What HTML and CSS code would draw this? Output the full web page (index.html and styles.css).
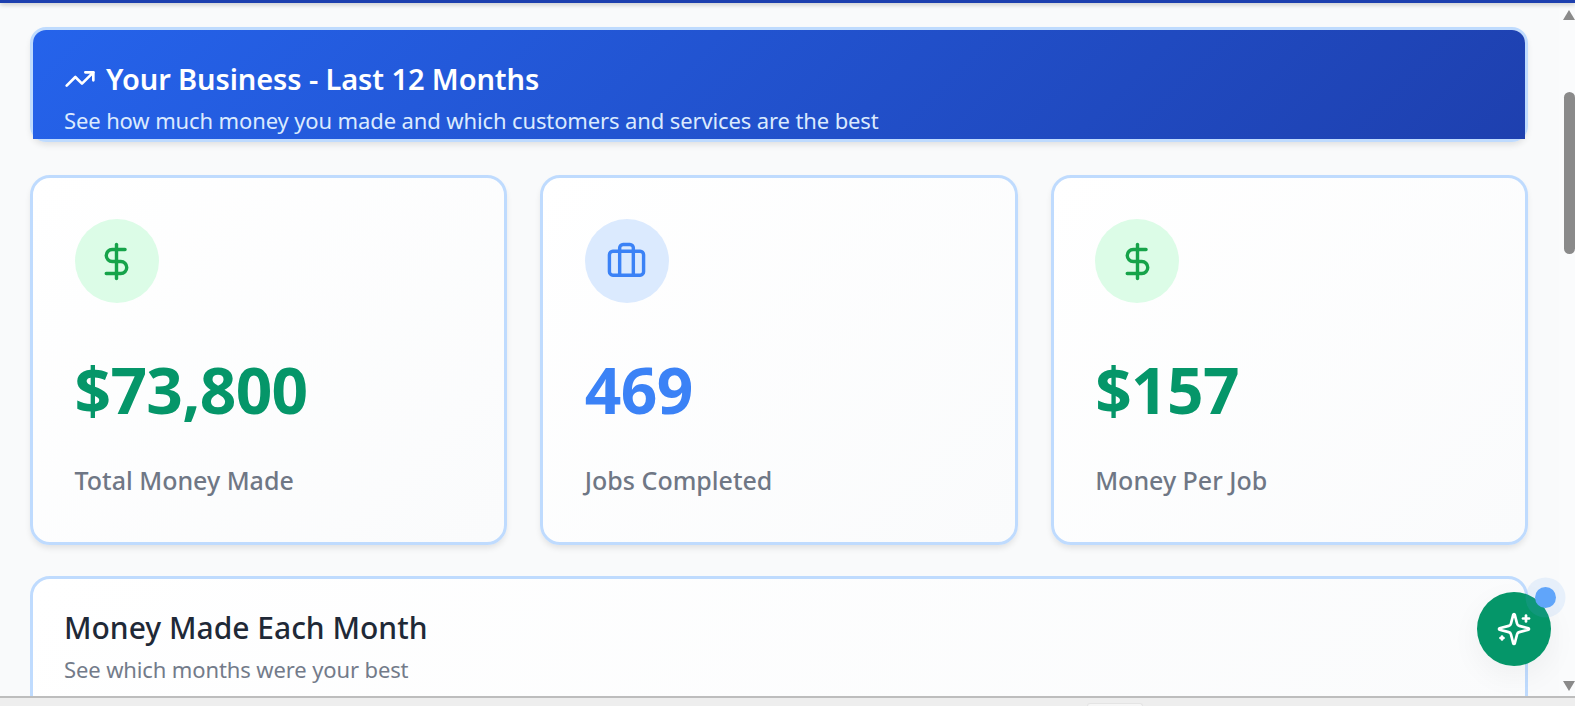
FILE: index.html
```html
<!DOCTYPE html>
<html lang="en">
<head>
    <meta charset="UTF-8">
    <title>Your Business</title>
    <link rel="stylesheet" href="styles.css">
</head>
<body>
    <div class="barra-top"></div>

    <div class="ventana">
        <main class="contenido">
            <section class="hero-card">
                <div class="hero">
                    <h1>
                        <svg class="icono-trend" viewBox="0 0 24 24" fill="none" stroke="currentColor" stroke-width="2" stroke-linecap="round" stroke-linejoin="round">
                            <path d="M22 7 13.5 15.5 8.5 10.5 2 17"/>
                            <path d="M16 7h6v6"/>
                        </svg>
                        Your Business - Last 12 Months
                    </h1>
                    <p>See how much money you made and which customers and services are the best</p>
                </div>
            </section>

            <section class="stats">
                <div class="stat">
                    <div class="stat-icono verde">
                        <svg viewBox="0 0 24 24" fill="none" stroke="currentColor" stroke-width="2" stroke-linecap="round" stroke-linejoin="round">
                            <line x1="12" y1="2" x2="12" y2="22"/>
                            <path d="M17 5H9.5a3.5 3.5 0 0 0 0 7h5a3.5 3.5 0 0 1 0 7H6"/>
                        </svg>
                    </div>
                    <div class="stat-valor txt-verde">$73,800</div>
                    <div class="stat-label">Total Money Made</div>
                </div>
                <div class="stat">
                    <div class="stat-icono azul">
                        <svg viewBox="0 0 24 24" fill="none" stroke="currentColor" stroke-width="2" stroke-linecap="round" stroke-linejoin="round">
                            <path d="M16 20V4a2 2 0 0 0-2-2h-4a2 2 0 0 0-2 2v16"/>
                            <rect x="2" y="6" width="20" height="14" rx="2"/>
                        </svg>
                    </div>
                    <div class="stat-valor txt-azul">469</div>
                    <div class="stat-label">Jobs Completed</div>
                </div>
                <div class="stat">
                    <div class="stat-icono verde">
                        <svg viewBox="0 0 24 24" fill="none" stroke="currentColor" stroke-width="2" stroke-linecap="round" stroke-linejoin="round">
                            <line x1="12" y1="2" x2="12" y2="22"/>
                            <path d="M17 5H9.5a3.5 3.5 0 0 0 0 7h5a3.5 3.5 0 0 1 0 7H6"/>
                        </svg>
                    </div>
                    <div class="stat-valor txt-verde">$157</div>
                    <div class="stat-label">Money Per Job</div>
                </div>
            </section>

            <section class="grafica">
                <h2>Money Made Each Month</h2>
                <p>See which months were your best</p>
            </section>
        </main>

        <div class="scrollbar">
            <span class="flecha arriba"></span>
            <div class="pista"><div class="pulgar"></div></div>
            <span class="flecha abajo"></span>
        </div>
    </div>

    <div class="barra-bottom"><span class="pestana"></span></div>

    <!-- boton flotante -->
    <button class="fab">
        <svg viewBox="0 0 24 24" fill="none" stroke="currentColor" stroke-width="1.8" stroke-linecap="round" stroke-linejoin="round">
            <path d="M9.94 15.5A2 2 0 0 0 8.5 14.06l-6.14-1.58a.5.5 0 0 1 0-.96L8.5 9.94A2 2 0 0 0 9.94 8.5l1.58-6.14a.5.5 0 0 1 .96 0L14.06 8.5A2 2 0 0 0 15.5 9.94l6.14 1.58a.5.5 0 0 1 0 .96L15.5 14.06a2 2 0 0 0-1.44 1.44l-1.58 6.14a.5.5 0 0 1-.96 0z"/>
            <path d="M20 3v4"/>
            <path d="M22 5h-4"/>
            <path d="M4 17v2"/>
            <path d="M5 18H3"/>
        </svg>
    </button>
    <span class="punto"></span>
</body>
</html>
```

FILE: styles.css
```css
* {
    margin: 0;
    padding: 0;
    box-sizing: border-box;
}

body {
    font-family: "Noto Sans", "Open Sans", sans-serif;
    background: #f9fafb;
    color: #1f2937;
    height: 706px;
    overflow: hidden;
    display: flex;
    flex-direction: column;
    position: relative;
}

.barra-top {
    height: 3px;
    background: #1e40af;
    box-shadow: 0 1px 5px rgba(0,0,0,0.3);
    position: relative;
    z-index: 2;
}

.ventana {
    flex: 1;
    display: flex;
    min-height: 0;
}

.contenido {
    flex: 1;
    min-width: 0;
    overflow: hidden;
    padding: 24px 31px 0 30px;
}

.hero-card {
    border: 3px solid #bfdbfe;
    border-radius: 16px;
    box-shadow: 0 4px 6px -1px rgba(0,0,0,0.1);
    height: 115px;
}

.hero {
    height: 109px;
    background: linear-gradient(135deg, #2563eb, #1e40af);
    color: white;
    padding: 31px 31px 0;
    border-radius: 13px 13px 0 0;
    overflow: hidden;
}

.hero h1 {
    display: flex;
    align-items: center;
    gap: 10px;
    font-size: 29px;
    line-height: 36px;
    font-weight: 600;
    letter-spacing: -0.1px;
}

.icono-trend {
    width: 32px;
    height: 32px;
}

.hero p {
    margin-top: 8px;
    font-size: 22px;
    line-height: 30px;
    color: #dbeafe;
    letter-spacing: -0.12px;
}

.stats {
    display: grid;
    grid-template-columns: repeat(3, 1fr);
    gap: 33px;
    margin-top: 33px;
}

.stat {
    height: 370px;
    border: 3px solid #bfdbfe;
    border-radius: 20px;
    background: linear-gradient(135deg, #ffffff, #fafbfc);
    box-shadow: 0 4px 6px -1px rgba(0,0,0,0.1);
    padding: 41px 41.5px 0;
}

.stat-icono {
    width: 84px;
    height: 84px;
    border-radius: 50%;
    display: flex;
    align-items: center;
    justify-content: center;
}

.stat-icono svg {
    width: 41px;
    height: 41px;
}

.verde {
    background: #dcfce7;
    color: #16a34a;
}

.azul {
    background: #dbeafe;
    color: #3b82f6;
}

.stat-valor {
    margin-top: 47px;
    font-size: 64px;
    line-height: 80px;
    font-weight: 700;
    letter-spacing: -0.7px;
}

.txt-verde {
    color: #059669;
}

.txt-azul {
    color: #3b82f6;
}

.stat-label {
    margin-top: 34px;
    font-size: 25px;
    line-height: 32px;
    font-weight: 500;
    color: #6f7785;
}

.grafica {
    margin-top: 31px;
    height: 200px;
    border: 3px solid #bfdbfe;
    border-radius: 20px;
    background: linear-gradient(135deg, #ffffff, #fafbfc);
    padding: 29px 31px 0;
}

.grafica h2 {
    font-size: 30px;
    line-height: 40px;
    font-weight: 500;
}

.grafica p {
    margin-top: 6px;
    font-size: 22px;
    line-height: 30px;
    color: #737b8a;
    letter-spacing: -0.12px;
}

.scrollbar {
    width: 16px;
    display: flex;
    flex-direction: column;
    align-items: flex-end;
    background: #fafbfc;
}

.flecha {
    width: 0;
    height: 0;
    border-left: 6px solid transparent;
    border-right: 6px solid transparent;
}

.arriba {
    border-bottom: 10px solid #8a8a8a;
    margin-top: 7px;
}

.abajo {
    border-top: 10px solid #8a8a8a;
    margin-bottom: 5px;
}

.pista {
    flex: 1;
    width: 11px;
    padding-top: 72px;
}

.pulgar {
    height: 162px;
    border-radius: 6px;
    background: #8a8a8a;
}

.barra-bottom {
    height: 10px;
    background: #eeeeee;
    border-top: 2px solid #bdbdbd;
    position: relative;
    z-index: 2;
}

.pestana {
    position: absolute;
    left: 1087px;
    top: 5px;
    width: 56px;
    height: 3px;
    background: #f6f6f6;
    border: 1px solid #e4e4e4;
    border-bottom: none;
    border-radius: 3px 3px 0 0;
}

.fab {
    position: absolute;
    left: 1477px;
    top: 592px;
    width: 74px;
    height: 74px;
    border: none;
    border-radius: 50%;
    background: #059669;
    color: white;
    display: flex;
    align-items: center;
    justify-content: center;
    box-shadow: 0 10px 30px rgba(0,0,0,0.05);
    z-index: 3;
}

.fab svg {
    width: 36px;
    height: 36px;
}

.punto {
    position: absolute;
    left: 1535px;
    top: 587px;
    width: 21px;
    height: 21px;
    border-radius: 50%;
    background: #60a5fa;
    box-shadow: 0 0 0 9.5px rgba(96,165,250,0.12);
    z-index: 4;
}
```
